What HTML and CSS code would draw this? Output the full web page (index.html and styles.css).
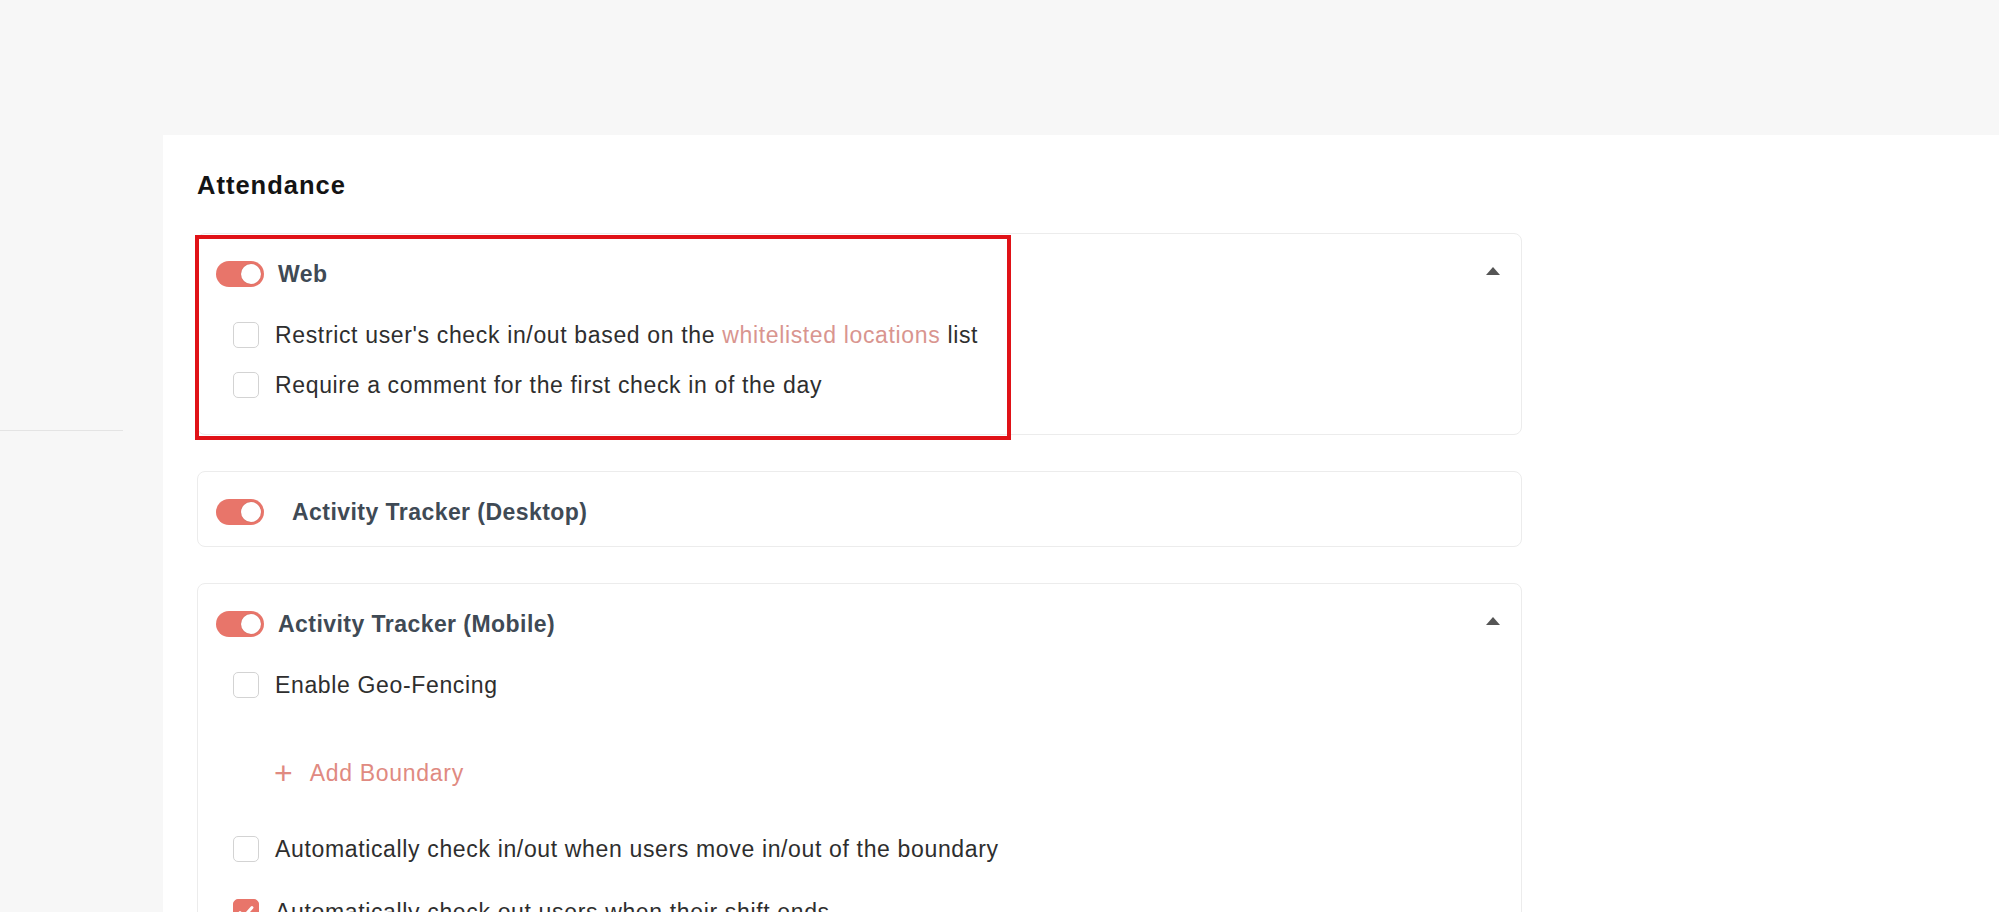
FILE: index.html
```html
<!DOCTYPE html>
<html lang="en">
<head>
<meta charset="utf-8">
<title>Attendance settings</title>
<link rel="stylesheet" href="styles.css">
</head>
<body>
<div class="layout">
  <aside class="sidebar">
    <div class="sidebar-rule"></div>
  </aside>
  <main class="main">
    <section class="panel">
      <h2 class="panel-title">Attendance</h2>

      <div class="card">
        <div class="card-header">
          <span class="toggle on"><span class="knob"></span></span>
          <span class="card-title">Web</span>
          <span class="caret"></span>
        </div>
        <div class="options">
          <label class="option"><span class="checkbox"></span><span class="option-text">Restrict user's check in/out based on the <a class="link">whitelisted locations</a> list</span></label>
          <label class="option"><span class="checkbox"></span><span class="option-text">Require a comment for the first check in of the day</span></label>
        </div>
      </div>

      <div class="card">
        <div class="card-header tall">
          <span class="toggle on"><span class="knob"></span></span>
          <span class="card-title wide">Activity Tracker (Desktop)</span>
        </div>
      </div>

      <div class="card">
        <div class="card-header">
          <span class="toggle on"><span class="knob"></span></span>
          <span class="card-title">Activity Tracker (Mobile)</span>
          <span class="caret"></span>
        </div>
        <div class="options">
          <label class="option"><span class="checkbox"></span><span class="option-text">Enable Geo-Fencing</span></label>
          <div class="add-boundary"><span class="plus">+</span><span>Add Boundary</span></div>
          <label class="option"><span class="checkbox"></span><span class="option-text">Automatically check in/out when users move in/out of the boundary</span></label>
          <label class="option option-gap"><span class="checkbox checked"><svg viewBox="0 0 26 26" width="26" height="26"><path d="M7 13.5l4 4 8-9" fill="none" stroke="#fff" stroke-width="3" stroke-linecap="round" stroke-linejoin="round"/></svg></span><span class="option-text">Automatically check out users when their shift ends</span></label>
        </div>
      </div>

      <div class="highlight"></div>
    </section>
  </main>
</div>
</body>
</html>
```

FILE: styles.css
```css
* { box-sizing: border-box; }
html, body { margin: 0; padding: 0; }
body {
  background: #f7f7f7;
  font-family: "Liberation Sans", Arial, Helvetica, sans-serif;
  color: #2e2e2e;
  overflow: hidden;
}
.layout {
  display: flex;
  min-height: 100vh;
}
.sidebar {
  width: 163px;
  flex: none;
  padding-top: 430px;
}
.sidebar-rule {
  width: 123px;
  height: 1px;
  background: #e4e4e4;
}
.main {
  flex: 1;
  display: flex;
  flex-direction: column;
  padding-top: 135px;
}
.panel {
  position: relative;
  flex: 1;
  background: #ffffff;
  padding: 35px 0 0 34px;
}
.panel-title {
  margin: 0 0 33px 0;
  font-size: 25.5px;
  letter-spacing: 1px;
  line-height: 30px;
  font-weight: 700;
  color: #141414;
}
.card {
  width: 1325px;
  border: 1px solid #ececec;
  border-radius: 8px;
  background: #fff;
  margin-bottom: 36px;
}
.card-header {
  display: flex;
  align-items: center;
  height: 26px;
  box-sizing: content-box;
  padding: 27px 21px 19px 18px;
}
.card-header.tall { padding-bottom: 21px; }
.toggle {
  position: relative;
  width: 48px;
  height: 26px;
  border-radius: 13px;
  background: #e8756a;
  flex: none;
}
.toggle .knob {
  position: absolute;
  top: 3px;
  right: 3px;
  width: 20px;
  height: 20px;
  border-radius: 50%;
  background: #fff;
  box-shadow: 0 0 1px rgba(0,0,0,0.25);
}
.card-title {
  margin-left: 14px;
  font-size: 23px;
  letter-spacing: 0.45px;
  font-weight: 700;
  color: #3f4a55;
  line-height: 26px;
}
.card-title.wide { margin-left: 28px; }
.caret {
  margin-left: auto;
  width: 0;
  height: 0;
  border-left: 7.5px solid transparent;
  border-right: 7.5px solid transparent;
  border-bottom: 8px solid #555;
  margin-top: -7px;
}
.options {
  padding: 4px 0 24px 35px;
}
.option {
  display: flex;
  align-items: center;
  height: 50px;
}
.checkbox {
  width: 26px;
  height: 26px;
  border: 1.5px solid #d3d3d3;
  border-radius: 5px;
  background: #fff;
  flex: none;
  display: flex;
  align-items: center;
  justify-content: center;
}
.checkbox.checked {
  background: #e8756a;
  border-color: #e8756a;
}
.checkbox svg { flex: none; }
.option-text {
  margin-left: 16px;
  font-size: 23px;
  letter-spacing: 0.65px;
  line-height: 26px;
  color: #2e2e2e;
}
.link {
  color: #d9958f;
  text-decoration: none;
}
.add-boundary {
  display: flex;
  align-items: center;
  height: 114px;
  padding: 12px 0 0 41px;
  color: #e08a81;
  font-size: 23px;
  letter-spacing: 0.7px;
  line-height: 26px;
}
.add-boundary .plus {
  font-size: 32px;
  font-weight: 300;
  margin-right: 17px;
  line-height: 26px;
  letter-spacing: 0;
}
.option-gap { margin-top: 13px; }
.highlight {
  position: absolute;
  left: 32px;
  top: 100px;
  width: 816px;
  height: 205px;
  border: 4px solid #e01217;
  pointer-events: none;
}
```
